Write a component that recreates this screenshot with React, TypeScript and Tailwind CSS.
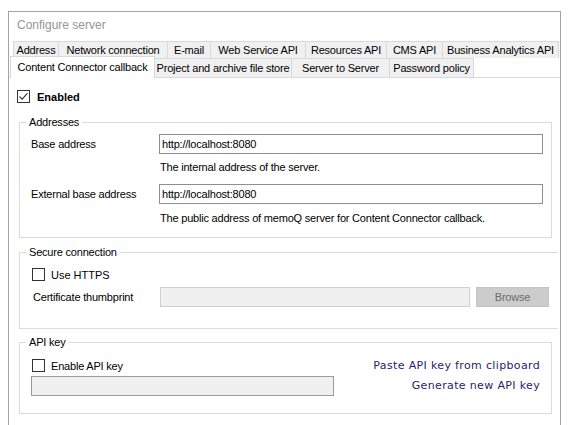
import React from 'react';

const rowOneTabs = [
  { label: 'Address', w: 'w-[45px]' },
  { label: 'Network connection', w: 'w-[109px]' },
  { label: 'E-mail', w: 'w-[43px]' },
  { label: 'Web Service API', w: 'w-[95px]' },
  { label: 'Resources API', w: 'w-[81px]' },
  { label: 'CMS API', w: 'w-[56px]' },
  { label: 'Business Analytics API', w: 'w-[117px]' },
];

const rowTwoTabs = [
  { label: 'Project and archive file store', w: 'w-[137px]' },
  { label: 'Server to Server', w: 'w-[98px]' },
  { label: 'Password policy', w: 'w-[84px]' },
];

function CheckBox({ checked = false }: { checked?: boolean }) {
  return (
    <span className="w-[13px] h-[13px] shrink-0 border border-[#333] bg-white flex items-center justify-center">
      {checked && (
        <svg width="11" height="11" viewBox="0 0 11 11">
          <path d="M1.5 5.5 L4.2 8.2 L9.5 2.2" fill="none" stroke="#333" strokeWidth="1.1" />
        </svg>
      )}
    </span>
  );
}

function Legend({ children }: { children: React.ReactNode }) {
  return (
    <span className="absolute -top-[8px] left-[6px] px-[3px] bg-white leading-[14px] text-black">
      {children}
    </span>
  );
}

export default function App() {
  return (
    <div className="min-h-screen bg-white font-['Liberation_Sans',Arial,sans-serif] text-[11px] tracking-[-0.2px] leading-[14px] text-black pt-[11px] pl-[8px]">
      <div className="w-[553px] h-[414px] border-l border-t border-r border-[#a3a3a3]">
        <div className="h-[29px] pl-[8px] pt-[5px] text-[12px] leading-[16px] tracking-[0px] text-[#969696]">
          Configure server
        </div>

        {/* tab strip */}
        <div className="flex ml-[4px] h-[17px]">
          {rowOneTabs.map((t, i) => (
            <div
              key={t.label}
              className={`${t.w} h-[17px] bg-[#f0f0f0] border-t border-l border-[#d9d9d9] flex items-center justify-center whitespace-nowrap ${i === rowOneTabs.length - 1 ? 'border-r' : ''}`}
            >
              {t.label}
            </div>
          ))}
        </div>
        <div className="flex items-end h-[20px] border-b border-[#d9d9d9]">
          <div className="relative z-10 ml-[1px] w-[145px] h-[22px] -mb-px bg-white border-t border-l border-r border-[#d9d9d9] flex items-center justify-center whitespace-nowrap pb-[2px]">
            Content Connector callback
          </div>
          {rowTwoTabs.map((t) => (
            <div
              key={t.label}
              className={`${t.w} h-[19px] bg-[#f0f0f0] border-t border-r border-[#d9d9d9] flex items-center justify-center whitespace-nowrap`}
            >
              {t.label}
            </div>
          ))}
        </div>

        {/* tab page */}
        <div className="pt-[12px]">
          <div className="flex items-center h-[13px] ml-[8px]">
            <CheckBox checked />
            <span className="ml-[7px] font-bold tracking-[0px]">Enabled</span>
          </div>

          {/* Addresses */}
          <div className="relative mt-[19px] ml-[10px] w-[533px] h-[116px] border border-[#dcdcdc]">
            <Legend>Addresses</Legend>
            <div className="pt-[11px]">
              <div className="flex items-center h-[20px]">
                <span className="pl-[11px] w-[139px]">Base address</span>
                <div className="w-[384px] h-[20px] border border-[#8f8f8f] flex items-center pl-[2px]">
                  http://localhost:8080
                </div>
              </div>
              <div className="mt-[6px] ml-[140px]">The internal address of the server.</div>
              <div className="flex items-center h-[20px] mt-[10px]">
                <span className="pl-[11px] w-[139px]">External base address</span>
                <div className="w-[384px] h-[20px] border border-[#8f8f8f] flex items-center pl-[2px]">
                  http://localhost:8080
                </div>
              </div>
              <div className="mt-[7px] ml-[140px]">
                The public address of memoQ server for Content Connector callback.
              </div>
            </div>
          </div>

          {/* Secure connection */}
          <div className="relative mt-[14px] ml-[10px] w-[539px] h-[77px] border-t border-l border-b border-[#dcdcdc]">
            <Legend>Secure connection</Legend>
            <div className="pt-[15px]">
              <div className="flex items-center h-[13px] ml-[12px]">
                <CheckBox />
                <span className="ml-[6px] tracking-[0px]">Use HTTPS</span>
              </div>
              <div className="flex items-center h-[20px] mt-[6px]">
                <span className="pl-[13px] w-[140px]">Certificate thumbprint</span>
                <div className="w-[310px] h-[20px] bg-[#f0f0f0] border border-[#cfcfcf]" />
                <div className="ml-[6px] w-[73px] h-[20px] bg-[#cccccc] border border-[#c4c4c4] text-[#6d6d6d] flex items-center justify-center">
                  Browse
                </div>
              </div>
            </div>
          </div>

          {/* API key */}
          <div className="relative mt-[13px] ml-[10px] w-[533px] h-[72px] border border-[#dcdcdc]">
            <Legend>API key</Legend>
            <div className="flex justify-between">
              <div className="pt-[16px]">
                <div className="flex items-center h-[13px] ml-[12px]">
                  <CheckBox />
                  <span className="ml-[6px]">Enable API key</span>
                </div>
                <div className="mt-[4px] ml-[11px] w-[303px] h-[20px] bg-[#f0f0f0] border border-[#9a9a9a]" />
              </div>
              <div className="pt-[15px] pr-[11px] flex flex-col items-end font-['DejaVu_Sans',Verdana,sans-serif] text-[11px] tracking-[0.35px] leading-[16px] text-[#1f1f6b]">
                <span>Paste API key from clipboard</span>
                <span className="mt-[4px]">Generate new API key</span>
              </div>
            </div>
          </div>
        </div>
      </div>
    </div>
  );
}
